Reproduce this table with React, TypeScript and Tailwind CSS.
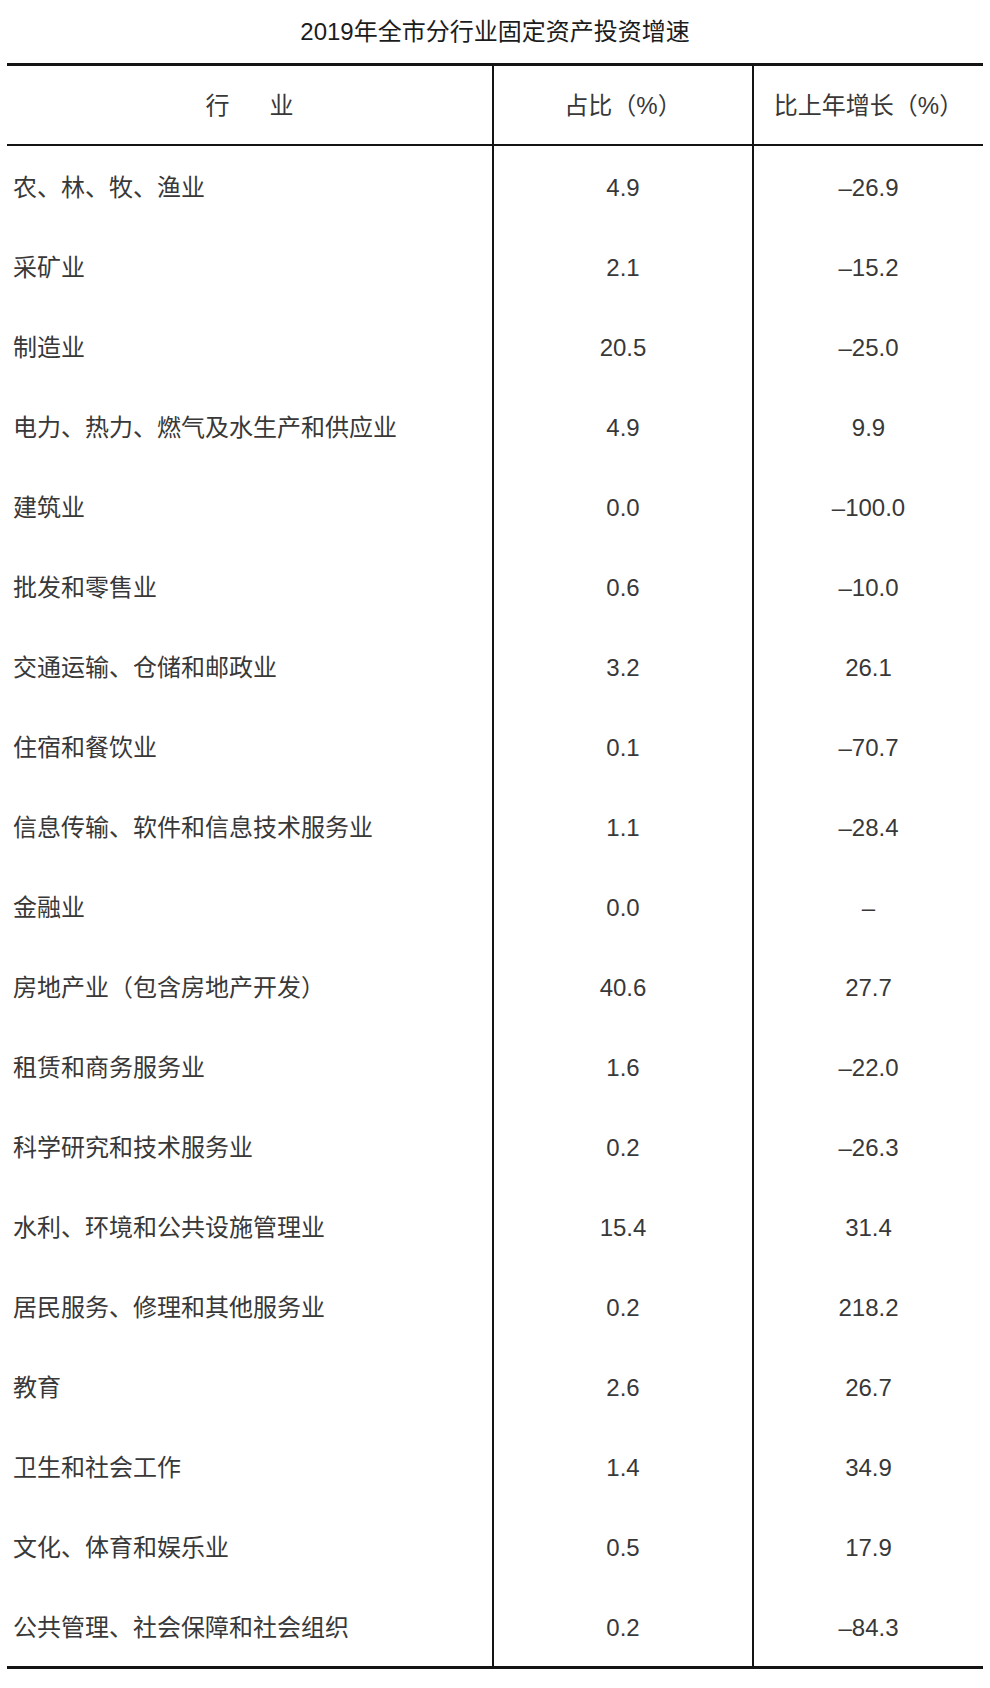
const rows: [string, string, string][] = [
  ["农、林、牧、渔业", "4.9", "–26.9"],
  ["采矿业", "2.1", "–15.2"],
  ["制造业", "20.5", "–25.0"],
  ["电力、热力、燃气及水生产和供应业", "4.9", "9.9"],
  ["建筑业", "0.0", "–100.0"],
  ["批发和零售业", "0.6", "–10.0"],
  ["交通运输、仓储和邮政业", "3.2", "26.1"],
  ["住宿和餐饮业", "0.1", "–70.7"],
  ["信息传输、软件和信息技术服务业", "1.1", "–28.4"],
  ["金融业", "0.0", "–"],
  ["房地产业（包含房地产开发）", "40.6", "27.7"],
  ["租赁和商务服务业", "1.6", "–22.0"],
  ["科学研究和技术服务业", "0.2", "–26.3"],
  ["水利、环境和公共设施管理业", "15.4", "31.4"],
  ["居民服务、修理和其他服务业", "0.2", "218.2"],
  ["教育", "2.6", "26.7"],
  ["卫生和社会工作", "1.4", "34.9"],
  ["文化、体育和娱乐业", "0.5", "17.9"],
  ["公共管理、社会保障和社会组织", "0.2", "–84.3"],
];

const App = () => {
  return (
    <div className="w-[990px] min-h-[1688px] bg-white text-[#383838] font-['Liberation_Sans','Noto_Sans_CJK_SC',sans-serif]">
      <div className="h-[63px] flex items-center justify-center text-[24px] text-[#1c1c1c]">
        2019年全市分行业固定资产投资增速
      </div>
      <div className="mx-[7px] border-t-[3px] border-b-[3px] border-[#141414]">
        <div className="grid grid-cols-[485px_260px_1fr] h-[80px] border-b-2 border-[#141414] text-[24px]">
          <div className="flex items-center justify-center pt-[2px]">
            行<span className="ml-[40px]">业</span>
          </div>
          <div className="flex items-center justify-center pt-[2px] border-l-2 border-[#141414]">占比（%）</div>
          <div className="flex items-center justify-center pt-[2px] border-l-2 border-[#141414]">比上年增长（%）</div>
        </div>
        {rows.map(([name, share, growth]) => (
          <div key={name} className="grid grid-cols-[485px_260px_1fr] h-[80px] text-[24px]">
            <div className="flex items-center pl-[6px] pt-[4px]">{name}</div>
            <div className="flex items-center justify-center pt-[4px] border-l-2 border-[#141414]">{share}</div>
            <div className="flex items-center justify-center pt-[4px] border-l-2 border-[#141414]">{growth}</div>
          </div>
        ))}
      </div>
    </div>
  );
};

export default App;
